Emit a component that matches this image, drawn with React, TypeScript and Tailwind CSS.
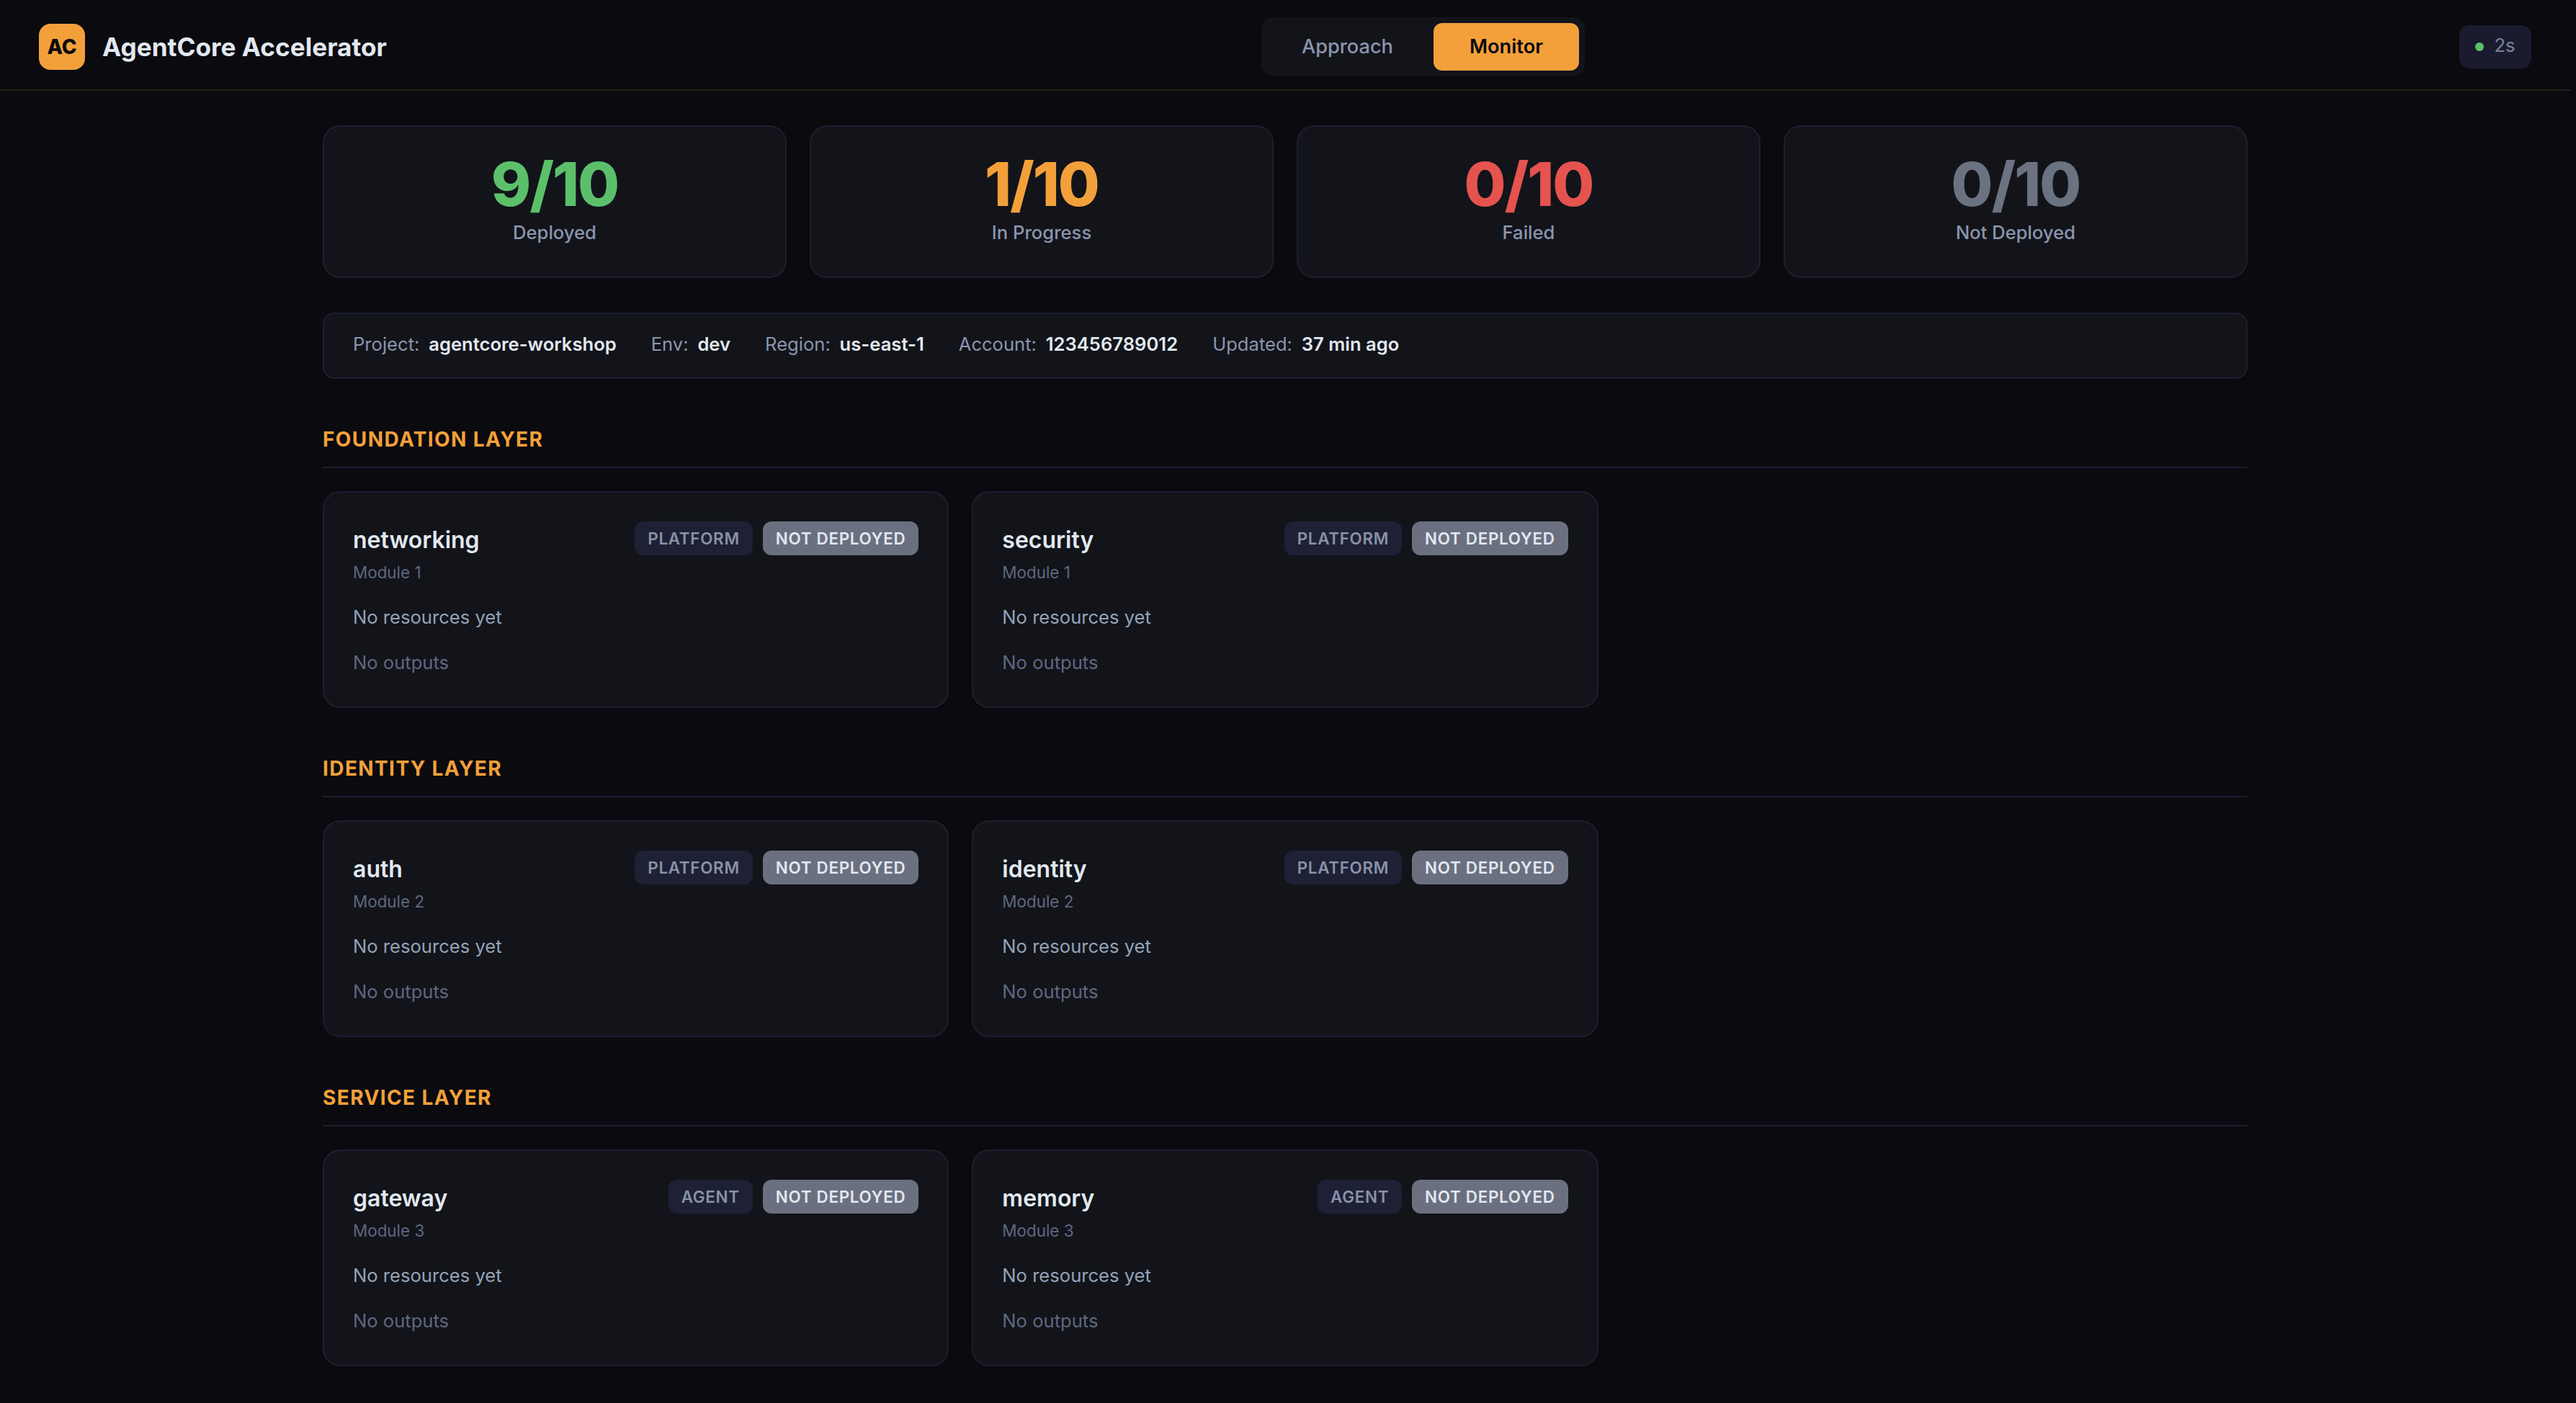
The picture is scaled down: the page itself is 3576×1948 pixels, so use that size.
import React from 'react';

const stats = [
  { value: '9/10', label: 'Deployed', color: 'text-[#5cc06a]' },
  { value: '1/10', label: 'In Progress', color: 'text-[#f3a03a]' },
  { value: '0/10', label: 'Failed', color: 'text-[#e5534f]' },
  { value: '0/10', label: 'Not Deployed', color: 'text-[#6b7280]' },
];

const info = [
  ['Project:', 'agentcore-workshop'],
  ['Env:', 'dev'],
  ['Region:', 'us-east-1'],
  ['Account:', '123456789012'],
  ['Updated:', '37 min ago'],
];

const layers = [
  {
    title: 'Foundation Layer',
    modules: [
      { name: 'networking', module: 'Module 1', kind: 'PLATFORM' },
      { name: 'security', module: 'Module 1', kind: 'PLATFORM' },
    ],
  },
  {
    title: 'Identity Layer',
    modules: [
      { name: 'auth', module: 'Module 2', kind: 'PLATFORM' },
      { name: 'identity', module: 'Module 2', kind: 'PLATFORM' },
    ],
  },
  {
    title: 'Service Layer',
    modules: [
      { name: 'gateway', module: 'Module 3', kind: 'AGENT' },
      { name: 'memory', module: 'Module 3', kind: 'AGENT' },
    ],
  },
];

function ModuleCard({ name, module, kind }: { name: string; module: string; kind: string }) {
  return (
    <div className="h-[301px] rounded-[24px] border-2 border-[#1e1e30] bg-[#12141a] px-[40px] pt-[40px]">
      <div className="flex items-start justify-between">
        <div>
          <div className="text-[32px] leading-[52px] font-semibold text-[#e2e8f0]">{name}</div>
          <div className="mt-[3px] text-[22.4px] leading-[32px] text-[#5f6880]">{module}</div>
        </div>
        <div className="flex gap-[14px]">
          <span className="flex h-[47px] items-center rounded-[12px] bg-[#1e2035] px-[18px] text-[22.4px] font-semibold tracking-[0.7px] text-[#8892a8]">
            {kind}
          </span>
          <span className="flex h-[47px] items-center rounded-[12px] bg-[#6b7080] px-[18px] text-[22.4px] font-semibold tracking-[0.7px] text-[#e2e8f0]">
            NOT DEPLOYED
          </span>
        </div>
      </div>
      <div className="mt-[26px] text-[25.6px] leading-[40px] text-[#94a3b8]">No resources yet</div>
      <div className="mt-[23px] text-[25.6px] leading-[40px] text-[#5f6880]">No outputs</div>
    </div>
  );
}

export default function App() {
  return (
    <div className="flex h-screen flex-col overflow-hidden bg-[#0a0a0f] pr-[8px] font-['Inter','Liberation_Sans',sans-serif]">
      {/* Header */}
      <header className="flex h-[126px] shrink-0 items-center justify-between border-b-2 border-[#2a2014] px-[54px] pt-[6px]">
        <div className="flex items-center gap-[24px]">
          <div className="flex h-[64px] w-[64px] items-center justify-center rounded-[16px] bg-[#f3a03a] text-[28px] font-extrabold text-[#0a0a0f]">
            AC
          </div>
          <div className="text-[35.2px] font-bold text-[#e2e8f0]">AgentCore Accelerator</div>
        </div>
        <nav className="flex h-[82px] items-center gap-[8px] rounded-[16px] bg-[#12141a] p-[8px]">
          <div className="flex h-[66px] items-center rounded-[12px] px-[48px] text-[27.2px] font-medium text-[#8b95ad]">Approach</div>
          <div className="flex h-[66px] items-center rounded-[12px] bg-[#f3a03a] px-[50px] text-[27.2px] font-semibold text-[#0a0a0f]">Monitor</div>
        </nav>
        <div className="flex h-[60px] w-[100px] items-center justify-center gap-[14px] rounded-[14px] bg-[#1a1b2e] text-[25.6px] text-[#7a849c]">
          <span className="h-[12px] w-[12px] rounded-full bg-[#5cc06a]" />
          <span className="-translate-y-[2px]">2s</span>
        </div>
      </header>

      <main className="mx-auto w-[2672px] pt-[48px]">
        {/* Stats */}
        <div className="grid grid-cols-4 gap-[32px]">
          {stats.map((s) => (
            <div key={s.label} className="flex h-[212px] flex-col items-center rounded-[24px] border-2 border-[#1e1e30] bg-[#12141a] pt-[32px]">
              <div className={`text-[84px] leading-[96px] font-extrabold tracking-[-2px] ${s.color}`}>{s.value}</div>
              <div className="mt-[1px] text-[25.6px] leading-[36px] font-medium text-[#8b95ad]">{s.label}</div>
            </div>
          ))}
        </div>

        {/* Project info */}
        <div className="mt-[48px] flex h-[92px] items-center gap-[48px] rounded-[16px] border-2 border-[#1e1e30] bg-[#12141a] px-[40px] pb-[4px]">
          {info.map(([k, v]) => (
            <div key={k} className="flex gap-[12.8px] text-[25.6px]">
              <span className="text-[#8b95ad]">{k}</span>
              <span className="font-semibold text-[#e2e8f0]">{v}</span>
            </div>
          ))}
        </div>

        {/* Layers */}
        {layers.map((layer) => (
          <section key={layer.title} className="mt-[64px]">
            <h2 className="border-b-2 border-[#1e1e30] pb-[18px] text-[28px] leading-[40px] font-bold tracking-[1.4px] text-[#f3a03a] uppercase">
              {layer.title}
            </h2>
            <div className="mt-[32px] grid grid-cols-3 gap-[32px]">
              {layer.modules.map((m) => (
                <ModuleCard key={m.name} {...m} />
              ))}
            </div>
          </section>
        ))}
      </main>
    </div>
  );
}
